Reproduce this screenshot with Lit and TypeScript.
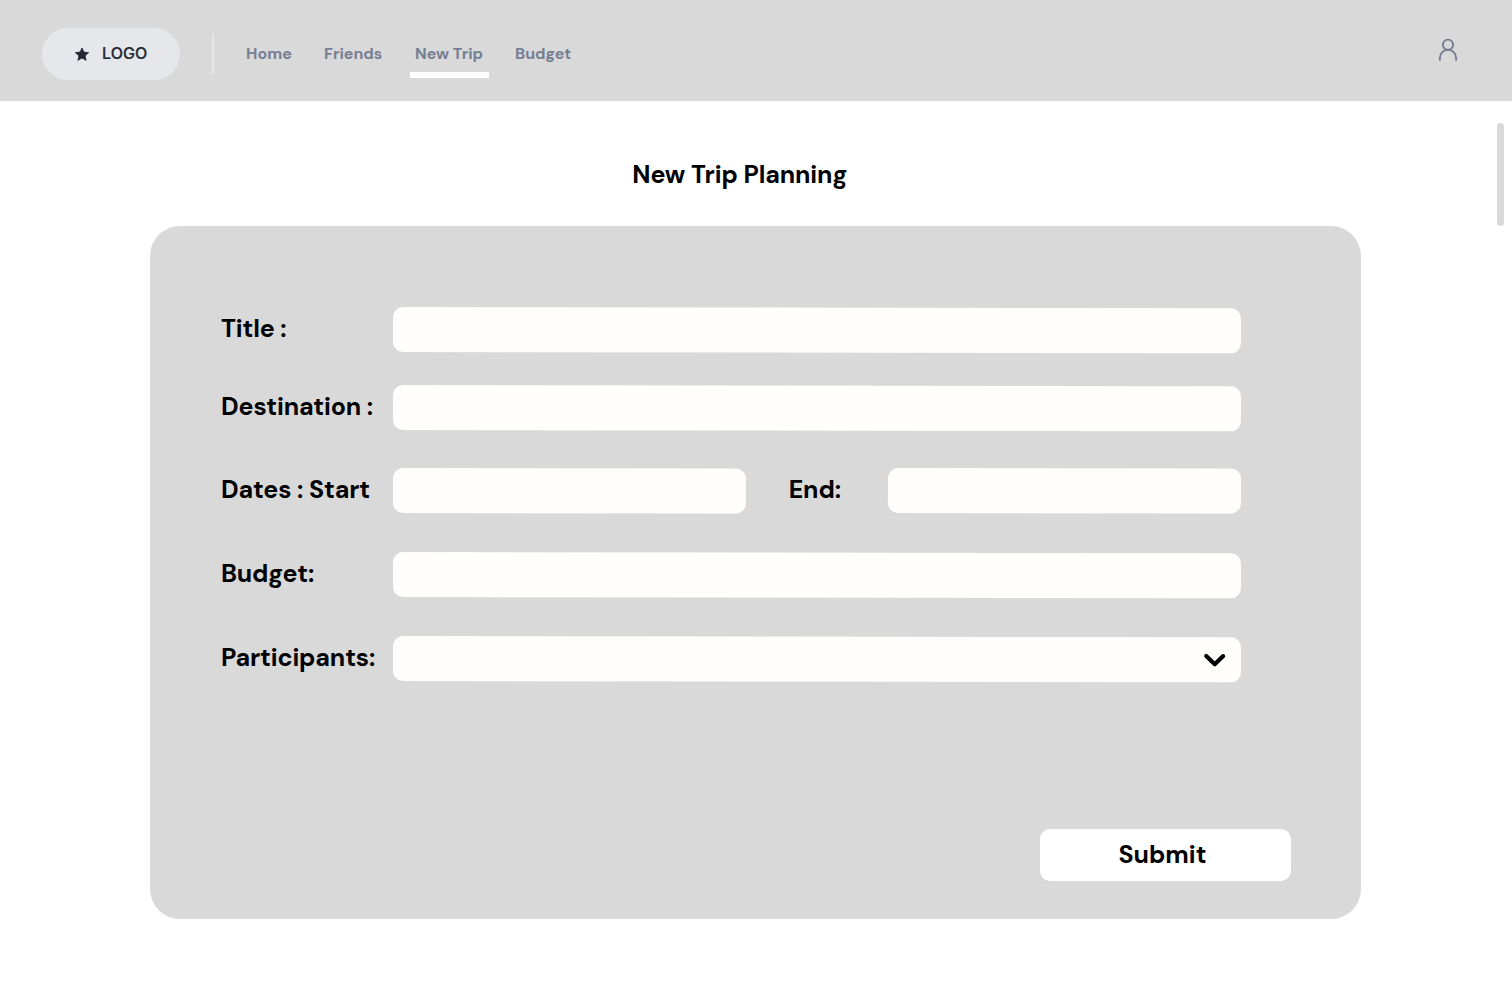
import { LitElement, html, css } from "lit";
import { customElement } from "lit/decorators.js";

@customElement("app-root")
export class AppRoot extends LitElement {
  static styles = css`
    :host {
      display: block;
      height: 982px;
      overflow: hidden;
      position: relative;
      background: #fff;
      color: #000;
      font-family: "DM Sans", Lato, sans-serif;
      font-weight: 700;
    }
    * { box-sizing: border-box; }
    header {
      height: 101px;
      background: #d9d9d9;
      display: flex;
      align-items: flex-start;
      padding: 28px 54px 0 42px;
    }
    .logo {
      width: 138px;
      height: 52px;
      border-radius: 26px;
      background: #e5e7eb;
      color: #242833;
      display: flex;
      align-items: flex-start;
      padding: 0 0 0 32px;
      font: 500 16px/50px Inter, sans-serif;
      letter-spacing: 0.1px;
      -webkit-text-stroke: 0.2px #242833;
      gap: 12px;
    }
    .star { width: 16px; height: 16px; margin-top: 18px; }
    .divider { width: 2px; height: 40px; margin: 6px 32px 0 32px; background: #e5e7eb; }
    nav {
      display: flex;
      flex: 1;
      gap: 32px;
      color: #767e93;
      font-size: 16px;
      line-height: 20px;
      white-space: nowrap;
      padding-top: 16px;
    }
    nav a { height: 34px; }
    .home { width: 46px; }
    .friends { width: 59px; }
    .trip {
      width: 79px;
      margin: 0 -6px 0 -5px;
      padding-left: 5px;
      border-bottom: 6px solid #fff;
    }
    .user { width: 20px; height: 24px; margin-top: 10px; }
    h1 {
      margin: 58px 0 36px 632.3px;
      font-size: 25px;
      font-weight: 700;
      line-height: 31px;
      letter-spacing: -0.12px;
    }
    form {
      width: 1211px;
      height: 693px;
      margin-left: 150px;
      border-radius: 30px;
      background: #d9d9d9;
      padding: 81px 70px 38px 71px;
      display: flex;
      flex-direction: column;
      font-size: 25px;
      letter-spacing: -0.14px;
    }
    .row { display: flex; height: 45px; margin-bottom: 39px; white-space: nowrap; }
    .row.first { margin-bottom: 33px; }
    .row.second { margin-bottom: 38px; }
    label { width: 172px; line-height: 43px; flex: none; }
    .end { width: 142px; padding-left: 42.7px; }
    .field {
      flex: none;
      width: 847.5px;
      height: 45px;
      border-radius: 10px;
      background: #fffefc;
      transform: rotate(0.09deg);
      transform-origin: 0 0;
    }
    .half { width: 353px; }
    .select { display: flex; justify-content: flex-end; padding: 15px 14px 0 0; }
    .chevron { width: 24px; height: 16px; }
    button {
      width: 251px;
      height: 52px;
      margin: auto 0 0 auto;
      border: 0;
      border-radius: 10px;
      background: #fff;
      color: #000;
      font: inherit;
      line-height: 31px;
      padding: 0 6px 1px 0;
      display: flex;
      align-items: center;
      justify-content: center;
    }
    .scrollbar {
      position: absolute;
      right: 8px;
      top: 123px;
      width: 7px;
      height: 103px;
      border-radius: 4px;
      background: #d9d9d9;
    }
  `;

  render() {
    return html`
      <header>
        <div class="logo">
          <svg class="star" viewBox="0 0 16 16" fill="currentColor" stroke="currentColor" stroke-width=".8" stroke-linejoin="round">
            <path d="M8 1.9 9.9 6.1 14.7 6.6 11.1 9.8 12.1 14.4 8 12 3.9 14.4 4.9 9.8 1.3 6.6 6.1 6.1Z" />
          </svg>
          <span>LOGO</span>
        </div>
        <div class="divider"></div>
        <nav>
          <a class="home">Home</a>
          <a class="friends">Friends</a>
          <a class="trip">New Trip</a>
          <a>Budget</a>
        </nav>
        <svg class="user" viewBox="0 0 20 24" fill="none" stroke="#767e93" stroke-width="1.9">
          <circle cx="10" cy="6.7" r="5.1" />
          <path d="M1.9 22.8V19.8a8.1 8.1 0 0 1 16.2 0V22.8" />
        </svg>
      </header>
      <h1>New Trip Planning</h1>
      <form>
        <div class="row first"><label>Title :</label><div class="field"></div></div>
        <div class="row second"><label>Destination :</label><div class="field"></div></div>
        <div class="row">
          <label>Dates : Start</label><div class="field half"></div>
          <label class="end">End:</label><div class="field half"></div>
        </div>
        <div class="row"><label>Budget:</label><div class="field"></div></div>
        <div class="row">
          <label>Participants:</label>
          <div class="field select">
            <svg class="chevron" viewBox="0 0 24 16" fill="none" stroke="#000" stroke-width="4.2" stroke-linecap="round" stroke-linejoin="round">
              <path d="M3.3 3.8 11.8 12 20.2 3.8" />
            </svg>
          </div>
        </div>
        <button type="button">Submit</button>
      </form>
      <div class="scrollbar"></div>
    `;
  }
}
